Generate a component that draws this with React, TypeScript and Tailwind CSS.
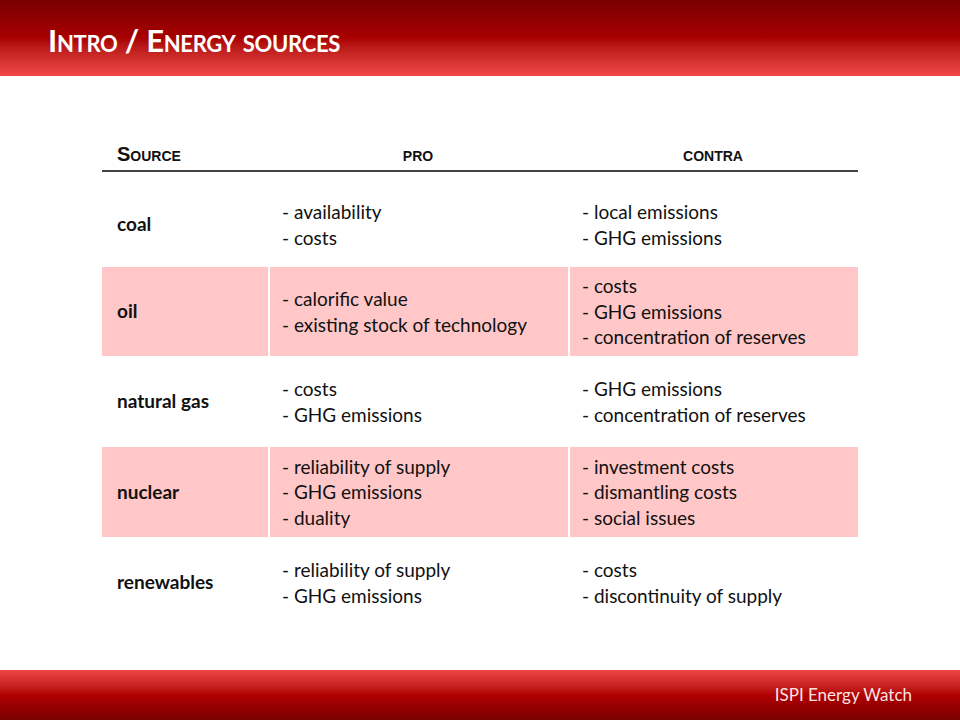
const rows = [
  { name: "coal", pro: ["availability", "costs"], contra: ["local emissions", "GHG emissions"], pink: false, h: "h-[95px]", pt: "pt-[10px]" },
  { name: "oil", pro: ["calorific value", "existing stock of technology"], contra: ["costs", "GHG emissions", "concentration of reserves"], pink: true, h: "h-[89px]", pt: "pt-0" },
  { name: "natural gas", pro: ["costs", "GHG emissions"], contra: ["GHG emissions", "concentration of reserves"], pink: false, h: "h-[91px]", pt: "pt-0" },
  { name: "nuclear", pro: ["reliability of supply", "GHG emissions", "duality"], contra: ["investment costs", "dismantling costs", "social issues"], pink: true, h: "h-[90px]", pt: "pt-0" },
  { name: "renewables", pro: ["reliability of supply", "GHG emissions"], contra: ["costs", "discontinuity of supply"], pink: false, h: "h-[91px]", pt: "pt-0" },
];

function Lines({ items }: { items: string[] }) {
  return (
    <div className="leading-[25.5px]">
      {items.map((t) => (
        <div key={t}>- {t}</div>
      ))}
    </div>
  );
}

export default function App() {
  return (
    <div className="w-[960px] h-[720px] bg-white flex flex-col font-['Lato',sans-serif] text-[#111]">
      <header className="h-[76px] shrink-0 bg-gradient-to-b from-[#7a0000] via-[#a80000] to-[#f24848] flex items-center pl-[48px] pt-[4px]">
        <h1 className="text-white font-bold text-[31px] [font-variant:small-caps] tracking-[-0.3px]">
          Intro / Energy sources
        </h1>
      </header>

      <main className="flex-1 px-[102px] pt-[64px]">
        <div className="w-[756px]">
          <div className="flex items-end h-[32px] pb-[4px] border-b-2 border-[#444] font-['Liberation_Sans',Arial,sans-serif] font-bold [font-variant:small-caps] text-[20px] leading-[24px]">
            <div className="w-[166px] pl-[15px]">Source</div>
            <div className="w-[300px] text-center">pro</div>
            <div className="flex-1 text-center">contra</div>
          </div>

          {rows.map((r) => (
            <div
              key={r.name}
              className={`flex text-[19px] ${r.h} ${r.pt} ${r.pink ? "bg-[#ffc7c7]" : "bg-white"}`}
            >
              <div className="w-[166px] pl-[15px] flex items-center font-bold">{r.name}</div>
              <div className={`w-[300px] flex items-center ${r.pink ? "border-l-2 border-white pl-[12px]" : "pl-[14px]"}`}>
                <Lines items={r.pro} />
              </div>
              <div className={`flex-1 flex items-center ${r.pink ? "border-l-2 border-white pl-[12px]" : "pl-[14px]"}`}>
                <Lines items={r.contra} />
              </div>
            </div>
          ))}
        </div>
      </main>

      <footer className="h-[50px] shrink-0 bg-gradient-to-b from-[#f04444] via-[#b00000] to-[#7a0000] flex items-center justify-end pr-[48px]">
        <span className="text-[#fbe4e4] text-[17px]">ISPI Energy Watch</span>
      </footer>
    </div>
  );
}
